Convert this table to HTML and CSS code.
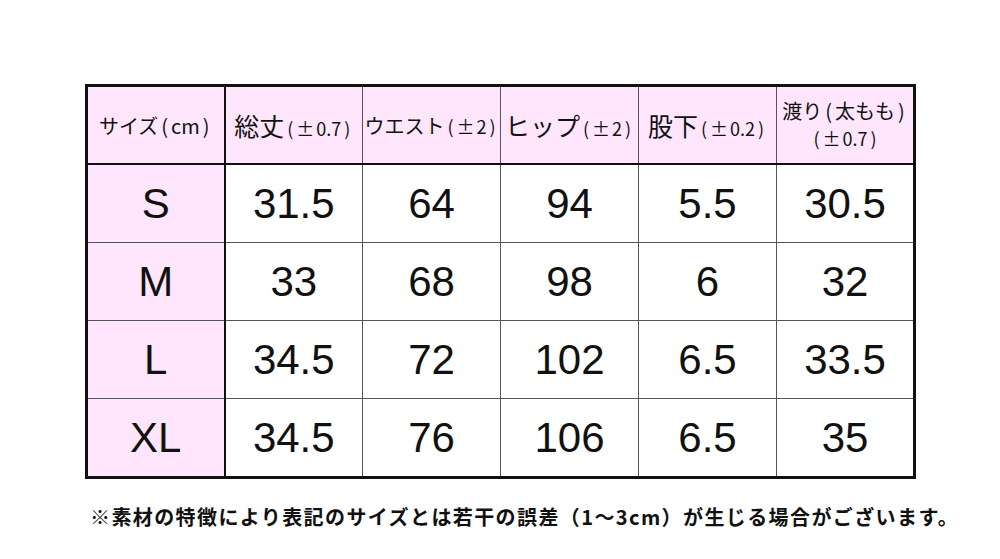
FILE: index.html
```html
<!DOCTYPE html>
<html lang="ja">
<head>
<meta charset="utf-8">
<link rel="stylesheet" href="styles.css">
</head>
<body>
<div class="page">
  <table class="size-table">
    <colgroup>
      <col class="c1"><col class="c"><col class="c"><col class="c"><col class="c"><col class="c">
    </colgroup>
    <thead>
      <tr>
        <th class="head-size"><span class="h-sm">サイズ<span class="par">(</span>cm<span class="par">)</span></span></th>
        <th><span class="h-lg">総丈</span><span class="h-tol"><span class="par">(</span><span class="pm">±</span>0.7<span class="par">)</span></span></th>
        <th><span class="h-md">ウエスト</span><span class="h-tol"><span class="par">(</span><span class="pm">±</span>2<span class="par">)</span></span></th>
        <th><span class="h-lg">ヒップ</span><span class="h-tol"><span class="par">(</span><span class="pm">±</span>2<span class="par">)</span></span></th>
        <th><span class="h-lg">股下</span><span class="h-tol"><span class="par">(</span><span class="pm">±</span>0.2<span class="par">)</span></span></th>
        <th class="two-line"><span class="h-md">渡り<span class="par">(</span>太もも<span class="par">)</span></span><br><span class="h-tol2"><span class="par">(</span><span class="pm">±</span>0.7<span class="par">)</span></span></th>
      </tr>
    </thead>
    <tbody>
      <tr><th class="size">S</th><td>31.5</td><td>64</td><td>94</td><td>5.5</td><td>30.5</td></tr>
      <tr><th class="size">M</th><td>33</td><td>68</td><td>98</td><td>6</td><td>32</td></tr>
      <tr><th class="size">L</th><td>34.5</td><td>72</td><td>102</td><td>6.5</td><td>33.5</td></tr>
      <tr><th class="size">XL</th><td>34.5</td><td>76</td><td>106</td><td>6.5</td><td>35</td></tr>
    </tbody>
  </table>
  <p class="note">※素材の特徴により表記のサイズとは若干の誤差（1～3cm）が生じる場合がございます。</p>
</div>
</body>
</html>
```
FILE: styles.css
```css
html, body {
  margin: 0;
  padding: 0;
  background: #fff;
}
body {
  width: 1000px;
  height: 559px;
  overflow: hidden;
  font-family: "Noto Sans CJK JP", "Liberation Sans", sans-serif;
  color: #111;
}
.page {
  padding: 84px 0 0 85px;
}
.size-table {
  border-collapse: collapse;
  table-layout: fixed;
  width: 830px;
  border: 3px solid #111;
}
.size-table col.c1 { width: 138px; }
.size-table col.c { width: 138px; }
.size-table th,
.size-table td {
  border: 1px solid #555;
  text-align: center;
  vertical-align: middle;
  padding: 0;
  font-weight: 400;
}
.size-table thead th {
  height: 76px;
  background: #ffe6fc;
  border-bottom: 2px solid #111;
  white-space: nowrap;
}
.size-table tbody td,
.size-table tbody th {
  height: 77px;
  font-family: "Liberation Sans", Arial, sans-serif;
  font-size: 42px;
}
.size-table .head-size,
.size-table th.size {
  border-right: 2px solid #111;
}
.size-table th.size {
  background: #ffe6fc;
}
.par {
  display: inline-block;
  margin: 0 3px;
}
.pm {
  display: inline-block;
  margin-right: 2px;
}
.h-sm { font-size: 20px; }
.h-md { font-size: 20px; }
.h-lg { font-size: 25px; }
.h-tol {
  font-size: 18px;
}
.two-line { line-height: 26px; }
.h-tol2 {
  font-size: 18px;
}
.note {
  margin: 23px 0 0 5px;
  font-size: 20px;
  font-weight: 700;
  white-space: nowrap;
  letter-spacing: 1.4px;
}
```
